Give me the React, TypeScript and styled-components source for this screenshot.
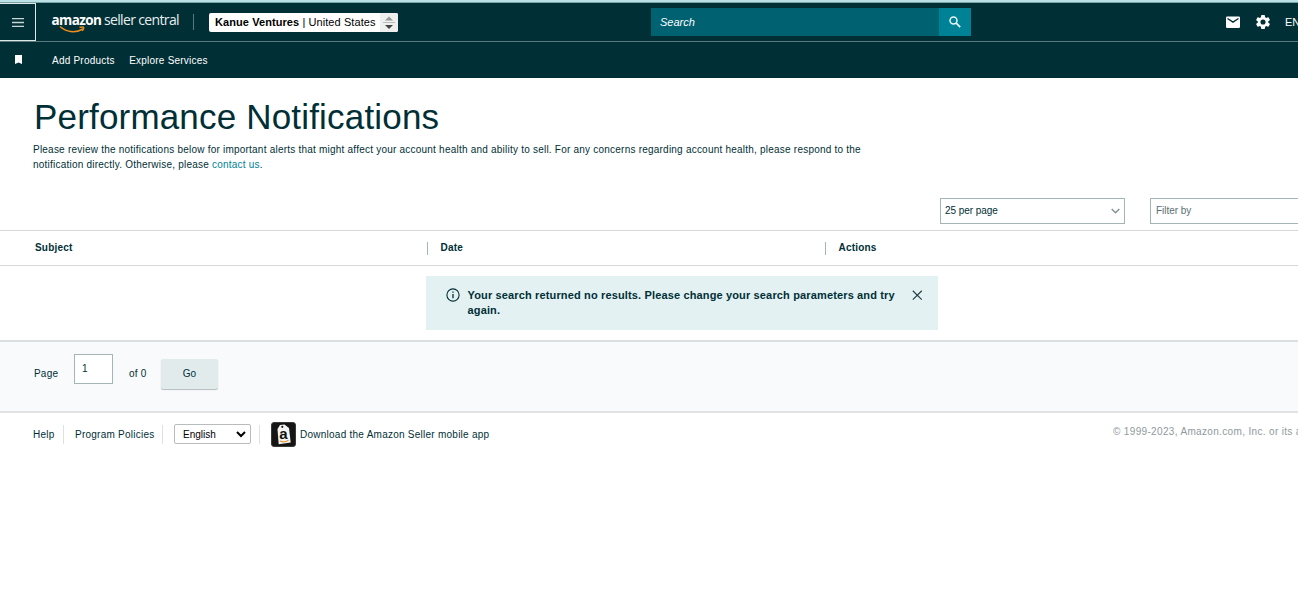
import React from "react";
import styled, { createGlobalStyle } from "styled-components";

const GlobalStyle = createGlobalStyle`
  * { box-sizing: border-box; }
  html, body { margin: 0; background: #fff; overflow: hidden; }
  body { font: 10px/15px "Liberation Sans", Arial, sans-serif; color: #002f36; }
`;

const Page = styled.div`
  width: 1298px;
  height: 611px;
  overflow: hidden;
`;
const TopStrip = styled.div`
  height: 3px;
  background: #b9e1e6;
  border-bottom: 1px solid #7ba3a7;
`;
const Header = styled.header`
  height: 39px;
  display: flex;
  align-items: flex-start;
  background: #002f36;
  border-bottom: 1px solid #5b7a7e;

  > * { flex-shrink: 0; }
`;
const MenuButton = styled.div`
  width: 36px;
  height: 38px;
  border: 1px solid #dfe8e8;
  border-left: 0;
  display: flex;
  align-items: center;
  padding-left: 12px;
`;
const Logo = styled.div`
  position: relative;
  display: flex;
  align-items: baseline;
  width: 157px;
  height: 28px;
  padding: 6px 0 0 15.5px;
  color: #e8eeee;
  font: 14px/22px "Open Sans", sans-serif;
  white-space: nowrap;
`;
const LogoBold = styled.span`
  width: 52.5px;
  font-size: 13.5px;
  font-weight: 700;
  letter-spacing: -0.6px;
  color: #fff;
`;
const LogoLight = styled.span`
  letter-spacing: -0.65px;
`;
const Smile = styled.svg`
  position: absolute;
  left: 23px;
  top: 20px;
`;
const LogoDivider = styled.div`
  width: 1px;
  height: 16px;
  margin-top: 11px;
  background: #5b7a7e;
`;
const AccountPicker = styled.div`
  display: flex;
  width: 189px;
  height: 19px;
  margin: 10px 0 0 15px;
  background: #fff;
  border-radius: 2px;
  overflow: hidden;
  color: #000;
  font-size: 11px;
  line-height: 18px;
  white-space: nowrap;
`;
const AccountName = styled.span`
  flex: 1;
  padding-left: 6px;
  letter-spacing: 0.08px;
`;
const Stepper = styled.span`
  width: 18px;
  height: 19px;
  background: #efefef;
`;
const SearchBox = styled.div`
  display: flex;
  width: 320px;
  height: 28px;
  margin: 5px 0 0 253px;
`;
const SearchField = styled.div`
  flex: 1;
  padding-left: 9px;
  background: #006170;
  color: #fff;
  font: italic 11px/28px "Liberation Sans", Arial, sans-serif;
`;
const SearchButton = styled.div`
  width: 32px;
  display: flex;
  align-items: center;
  justify-content: center;
  background: #008296;
`;
const HeaderTools = styled.div`
  display: flex;
  align-items: center;
  gap: 14px;
  height: 38px;
  margin-left: 254px;
  color: #fff;
  font-size: 11px;
  white-space: nowrap;
`;
const Nav = styled.nav`
  height: 36px;
  display: flex;
  align-items: center;
  padding-left: 14px;
  background: #002f36;
  color: #fff;
  white-space: nowrap;
`;
const NavItem = styled.span<{ $gap: number }>`
  margin-left: ${(p) => p.$gap}px;
  font-size: 10px;
  letter-spacing: 0.22px;
`;
const Intro = styled.section`
  height: 120px;
  padding: 18px 0 0 33px;
`;
const Title = styled.h1`
  margin: 0 0 0 1px;
  font-size: 35px;
  line-height: 42px;
  font-weight: 400;
  letter-spacing: 0.18px;
`;
const Description = styled.p`
  margin: 4px 0 0;
  letter-spacing: 0.222px;
  white-space: nowrap;
`;
const Link = styled.a`
  color: #007f94;
`;
const Filters = styled.div`
  height: 32px;
  display: flex;
  gap: 25px;
  padding-left: 940px;
`;
const Field = styled.div<{ $width: number; $muted?: boolean }>`
  flex: none;
  display: flex;
  align-items: center;
  justify-content: space-between;
  width: ${(p) => p.$width}px;
  height: 26px;
  padding: 0 4px ${(p) => (p.$muted ? "1px 5px" : "1px 4px")};
  border: 1px solid #a5b5b5;
  color: ${(p) => (p.$muted ? "#5b7074" : "#002f36")};
  letter-spacing: -0.05px;
`;
const TableHead = styled.div`
  display: flex;
  align-items: center;
  height: 36px;
  border-top: 1px solid #d5d9d9;
  border-bottom: 1px solid #d5d9d9;
  font-weight: 700;
  letter-spacing: 0.2px;
`;
const HeadCell = styled.div<{ $width: number; $first?: boolean }>`
  width: ${(p) => p.$width}px;
  height: 13px;
  line-height: 12px;
  padding-left: ${(p) => (p.$first ? 35 : 12.5)}px;
  border-left: ${(p) => (p.$first ? "0" : "1px solid #a5b5b5")};
`;
const Results = styled.div`
  height: 74px;
  padding: 10px 0 0 426px;
`;
const Alert = styled.div`
  display: flex;
  width: 512px;
  height: 54px;
  padding: 12px 15px 0 20px;
  background: #e3f1f2;

  > * { flex-shrink: 0; }
`;
const AlertText = styled.div`
  width: 451px;
  padding-left: 7.5px;
  font-size: 11px;
  font-weight: 700;
  line-height: 15px;
  letter-spacing: 0.145px;
  white-space: nowrap;
`;
const Pager = styled.div`
  display: flex;
  height: 73px;
  padding: 12px 0 0 34px;
  background: #f9fafc;
  border-top: 2px solid #dadfe1;
  border-bottom: 2px solid #e0e3e6;
  letter-spacing: 0.2px;
`;
const PagerLabel = styled.span<{ $width: number }>`
  width: ${(p) => p.$width}px;
  padding-top: 12px;
`;
const PageInput = styled.div`
  width: 39px;
  height: 30px;
  margin-right: 16px;
  padding-left: 7px;
  background: #fff;
  border: 1px solid #a5b5b5;
  line-height: 28px;
`;
const GoButton = styled.div`
  width: 57px;
  height: 30px;
  margin-top: 5px;
  background: #e1ebeb;
  border-radius: 2px;
  box-shadow: 0 1px 1px #b4bcbd;
  line-height: 30px;
  text-align: center;
`;
const Footer = styled.footer`
  display: flex;
  align-items: center;
  height: 42px;
  padding-left: 33px;
  letter-spacing: 0.25px;
  white-space: nowrap;

  > * { flex-shrink: 0; }
`;
const FooterLink = styled.span<{ $width: number }>`
  width: ${(p) => p.$width}px;
`;
const FooterDivider = styled.span<{ $after: number }>`
  width: 1px;
  height: 19px;
  margin-right: ${(p) => p.$after}px;
  background: #dde1e3;
`;
const LanguageSelect = styled.div`
  display: flex;
  align-items: center;
  justify-content: space-between;
  width: 77px;
  height: 20px;
  margin-right: 8px;
  padding: 0 4px 0 8px;
  border: 1px solid #b8bcbd;
  border-radius: 2px;
  color: #000;
  letter-spacing: 0;
`;
const AppLabel = styled.span`
  width: 817px;
  padding-left: 4px;
`;
const Copyright = styled.span`
  align-self: flex-start;
  margin-top: 11px;
  color: #8f999c;
  letter-spacing: 0.34px;
`;

export default function App() {
  return (
    <Page>
      <GlobalStyle />
      <TopStrip />
      <Header>
        <MenuButton>
          <svg width="12" height="9" viewBox="0 0 12 9">
            <path d="M0 .5h12M0 4.5h12M0 8.5h12" stroke="#c9d5d6" strokeWidth="1.5" />
          </svg>
        </MenuButton>
        <Logo>
          <LogoBold>amazon</LogoBold>
          <LogoLight>seller central</LogoLight>
          <Smile width="28" height="11" viewBox="0 0 28 11" fill="none" stroke="#ef8e1c" strokeWidth="1.5">
            <path d="M1 3.500C7 9 16 10.500 24 6M20.500 4.500c2-.8 4-.8 4.200 0s-.5 2.200-1.400 3.400" />
          </Smile>
        </Logo>
        <LogoDivider />
        <AccountPicker>
          <AccountName>
            <b>Kanue Ventures</b> | United States
          </AccountName>
          <Stepper>
            <svg width="18" height="19" viewBox="0 0 18 19">
              <path d="M5 7.500l4-4 4 4z" fill="#999" />
              <path d="M3 9.500h12" stroke="#bbb" />
              <path d="M5 12h8l-4 4z" fill="#444" />
            </svg>
          </Stepper>
        </AccountPicker>
        <SearchBox>
          <SearchField>Search</SearchField>
          <SearchButton>
            <svg width="12" height="12" viewBox="0 0 12 12" fill="none" stroke="#e8f6f7">
              <circle cx="4.500" cy="4.500" r="3.500" strokeWidth="1.500" />
              <path d="M7.200 7.200l4 4" strokeWidth="1.800" />
            </svg>
          </SearchButton>
        </SearchBox>
        <HeaderTools>
          <svg width="16" height="16" viewBox="0 0 16 16">
            <rect x="1" y="2.500" width="14" height="11.500" rx="1.300" fill="#fff" />
            <path d="M2.500 4.500L8 8.200l5.500-3.700" fill="none" stroke="#002f36" strokeWidth="1.400" />
          </svg>
          <svg width="16" height="16" viewBox="0 0 24 24">
            <path
              fill="#fff"
              d="M21.500 12.900v-1.800l2-1.600a.5.5 0 0 0 .1-.6l-1.900-3.300a.5.5 0 0 0-.6-.2l-2.400 1a7.500 7.500 0 0 0-1.600-1L16.700 2.900a.5.5 0 0 0-.5-.4h-3.800a.5.5 0 0 0-.5.400l-.4 2.500a8 8 0 0 0-1.600 1l-2.400-1a.5.5 0 0 0-.6.2L5 8.900a.5.5 0 0 0 .1.6l2 1.600v1.800l-2 1.600a.5.5 0 0 0-.1.600l1.900 3.300c.1.200.4.300.6.200l2.400-1a8 8 0 0 0 1.600 1l.4 2.500c0 .2.200.4.500.4h3.800c.3 0 .5-.2.5-.4l.4-2.500a8 8 0 0 0 1.600-1l2.400 1c.2.100.5 0 .6-.2l1.900-3.300a.5.5 0 0 0-.1-.6zM14.300 15.500a3.500 3.500 0 1 1 0-7 3.500 3.500 0 0 1 0 7z"
              transform="matrix(1.100 0 0 1.100 -3.700 -1.200)"
            />
          </svg>
          <span>EN</span>
        </HeaderTools>
      </Header>
      <Nav>
        <svg width="8" height="10" viewBox="0 0 8 10">
          <path d="M1 0h7v9L4.500 7.500 1 9z" fill="#fff" />
        </svg>
        <NavItem $gap={30}>Add Products</NavItem>
        <NavItem $gap={14.500}>Explore Services</NavItem>
      </Nav>
      <Intro>
        <Title>Performance Notifications</Title>
        <Description>
          Please review the notifications below for important alerts that might affect your account health and ability to sell. For any concerns regarding account health, please respond to the
          <br />
          notification directly. Otherwise, please <Link>contact us</Link>.
        </Description>
      </Intro>
      <Filters>
        <Field $width={185}>
          25 per page
          <svg width="9" height="6" viewBox="0 0 9 6">
            <path d="M.7 1l3.800 3.700L8.300 1" fill="none" stroke="#879596" strokeWidth="1.600" />
          </svg>
        </Field>
        <Field $width={185} $muted>
          Filter by
        </Field>
      </Filters>
      <TableHead>
        <HeadCell $width={427} $first>Subject</HeadCell>
        <HeadCell $width={398}>Date</HeadCell>
        <HeadCell $width={473}>Actions</HeadCell>
      </TableHead>
      <Results>
        <Alert>
          <svg width="14" height="14" viewBox="0 0 14 14">
            <circle cx="7" cy="7" r="6.100" fill="none" stroke="#002f36" strokeWidth="1.100" />
            <path d="M7 6v4.300M7 3.500v1.300" stroke="#002f36" strokeWidth="1.300" />
          </svg>
          <AlertText>
            Your search returned no results. Please change your search parameters and try
            <br />
            again.
          </AlertText>
          <svg width="12" height="14" viewBox="0 0 12 14">
            <path d="M1.800 2.800l9 8.800M10.800 2.800l-9 8.800" stroke="#213f45" strokeWidth="1.200" />
          </svg>
        </Alert>
      </Results>
      <Pager>
        <PagerLabel $width={40}>Page</PagerLabel>
        <PageInput>1</PageInput>
        <PagerLabel $width={32}>of 0</PagerLabel>
        <GoButton>Go</GoButton>
      </Pager>
      <Footer>
        <FooterLink $width={30}>Help</FooterLink>
        <FooterDivider $after={11} />
        <FooterLink $width={87}>Program Policies</FooterLink>
        <FooterDivider $after={11} />
        <LanguageSelect>
          English
          <svg width="10" height="7" viewBox="0 0 10 7">
            <path d="M1 1l4 4 4-4" fill="none" stroke="#000" strokeWidth="2" />
          </svg>
        </LanguageSelect>
        <FooterDivider $after={11} />
        <svg width="25" height="25" viewBox="0 0 25 25">
          <rect x=".5" y=".5" width="24" height="24" rx="2.500" fill="#151515" stroke="#3a3a3a" />
          <path d="M6.500 7l2.500-4 4.500-.5 4.500 3.500 1.700 14.500-12 1.700z" fill="#f4f4f4" />
          <circle cx="11.300" cy="4.800" r="1.100" fill="#151515" />
          <text x="8.300" y="16.500" fontFamily="Liberation Sans" fontWeight="700" fontSize="15" fill="#111">a</text>
          <path d="M9 19q4 2 8.500-.8" fill="none" stroke="#e89a38" strokeWidth="1.300" />
        </svg>
        <AppLabel>Download the Amazon Seller mobile app</AppLabel>
        <Copyright>© 1999-2023, Amazon.com, Inc. or its affiliates</Copyright>
      </Footer>
    </Page>
  );
}
